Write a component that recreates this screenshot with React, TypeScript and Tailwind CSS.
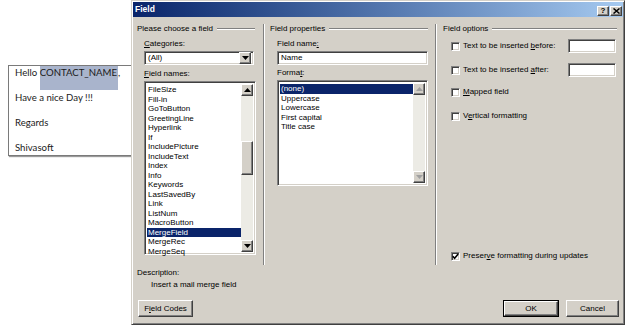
import React from "react";

const sunken =
  "border border-t-[#808080] border-l-[#808080] border-b-white border-r-white shadow-[inset_1px_1px_0_#404040,inset_-1px_-1px_0_#d4d0c8]";
const raised =
  "border border-t-white border-l-white border-b-[#404040] border-r-[#404040] shadow-[inset_-1px_-1px_0_#808080] bg-[#d4d0c8]";

function U({ children }: { children: React.ReactNode }) {
  return <span className="underline underline-offset-[1px]">{children}</span>;
}

function Arrow({ up, disabled }: { up?: boolean; disabled?: boolean }) {
  return (
    <div className={`${raised} w-[12px] h-[12px] flex items-center justify-center`}>
      <svg width="7" height="4" viewBox="0 0 7 4">
        {up ? (
          <polygon points="3.5,0 7,4 0,4" fill={disabled ? "#a0a0a0" : "#000"} />
        ) : (
          <polygon points="0,0 7,0 3.5,4" fill={disabled ? "#a0a0a0" : "#000"} />
        )}
      </svg>
    </div>
  );
}

function CheckBox({ checked }: { checked?: boolean }) {
  return (
    <div className={`${sunken} w-[9px] h-[9px] bg-white shrink-0 flex items-center justify-center`}>
      {checked && (
        <svg width="7" height="7" viewBox="0 0 7 7">
          <polyline points="0.8,3.2 2.6,5.2 6.2,1" fill="none" stroke="#000" strokeWidth="1.6" />
        </svg>
      )}
    </div>
  );
}

function GroupLabel({ text, mr }: { text: string; mr: string }) {
  return (
    <div className={`flex items-center h-[10px] ${mr}`}>
      <span className="leading-[10px] whitespace-nowrap">{text}</span>
      <div className="flex-1 ml-[4px] h-[2px] border-t border-t-[#808080] border-b border-b-white" />
    </div>
  );
}

const fieldNames = [
  "FileSize",
  "Fill-in",
  "GoToButton",
  "GreetingLine",
  "Hyperlink",
  "If",
  "IncludePicture",
  "IncludeText",
  "Index",
  "Info",
  "Keywords",
  "LastSavedBy",
  "Link",
  "ListNum",
  "MacroButton",
  "MergeField",
  "MergeRec",
  "MergeSeq",
];

const formats = ["(none)", "Uppercase", "Lowercase", "First capital", "Title case"];

export default function App() {
  return (
    <div className="relative w-[628px] h-[327px] bg-white overflow-hidden">
      {/* Document behind */}
      <div
        className="absolute left-[8px] top-[65px] w-[140px] h-[91px] border border-[#7a7a7a] shadow-[1px_1px_1px_#9a9a9a] bg-white pl-[6px] text-[9.6px] text-[#1a1a1a]"
        style={{ fontFamily: "Lato, 'Liberation Sans', sans-serif" }}
      >
        <div className="h-[25px] leading-[14px] whitespace-nowrap">
          Hello{" "}
          <span className="inline-block align-top h-[24px] bg-[#a9b4cc] pr-[1px]">CONTACT_NAME</span>,
        </div>
        <div className="h-[25px] leading-[14px]">Have a nice Day !!!</div>
        <div className="h-[25px] leading-[14px]">Regards</div>
        <div className="h-[25px] leading-[14px]">Shivasoft</div>
      </div>

      {/* Dialog */}
      <div
        className="absolute left-[131px] top-0 w-[494px] h-[325px] bg-[#d4d0c8] border border-t-[#d4d0c8] border-l-[#d4d0c8] border-b-[#404040] border-r-[#404040] shadow-[inset_1px_1px_0_#fff,inset_-1px_-1px_0_#808080] p-[1px] flex flex-col text-[8px] text-black"
        style={{ fontFamily: "'Liberation Sans', Arial, sans-serif" }}
      >
        {/* Title bar */}
        <div className="h-[15px] flex items-center bg-gradient-to-r from-[#0a246a] to-[#a6caf0] pl-[2px] pr-[1px]">
          <span className="font-bold text-white text-[8.5px] leading-[15px]">Field</span>
          <div className="ml-auto flex items-center mt-[2px]">
            <div className={`${raised} w-[12px] h-[10px] flex items-center justify-center font-bold text-[8px] leading-none`}>
              ?
            </div>
            <div className={`${raised} w-[12px] h-[10px] ml-[1px] flex items-center justify-center`}>
              <svg width="7" height="6" viewBox="0 0 7 6">
                <path d="M0.5 0.5 L6.5 5.5 M6.5 0.5 L0.5 5.5" stroke="#000" strokeWidth="1.5" />
              </svg>
            </div>
          </div>
        </div>

        {/* Body */}
        <div className="flex-1 flex flex-col pl-[4px] pr-[4px] pt-[7px]">
          <div className="flex h-[241px]">
            {/* Column 1 */}
            <div className="w-[126px] flex flex-col">
              <GroupLabel text="Please choose a field" mr="mr-[8px]" />
              <div className="pl-[7px] mt-[5px] h-[10px] leading-[10px]">
                <U>C</U>ategories:
              </div>
              <div className={`${sunken} ml-[7px] mt-[2px] w-[110px] h-[14px] bg-white flex items-center p-[2px]`}>
                <span className="pl-[1px] leading-[10px] flex-1">(All)</span>
                <Arrow />
              </div>
              <div className="pl-[7px] mt-[4px] h-[10px] leading-[10px]">
                <U>F</U>ield names:
              </div>
              <div className={`${sunken} ml-[7px] mt-[2px] w-[112px] h-[174px] bg-white flex p-[2px]`}>
                <div className="flex-1 flex flex-col pt-[1px]">
                  {fieldNames.map((n) => (
                    <div
                      key={n}
                      className={`h-[9.5px] leading-[9.5px] pl-[1px] whitespace-nowrap ${
                        n === "MergeField" ? "bg-[#0a246a] text-white" : ""
                      }`}
                    >
                      {n}
                    </div>
                  ))}
                </div>
                <div className="w-[12px] flex flex-col bg-[#ecebe5]">
                  <Arrow up />
                  <div className="h-[45px]" />
                  <div className={`${raised} w-[12px] h-[34px]`} />
                  <div className="flex-1" />
                  <Arrow />
                </div>
              </div>
            </div>

            {/* Separator */}
            <div className="w-[2px] border-l border-l-[#808080] border-r border-r-white" />

            {/* Column 2 */}
            <div className="w-[170px] flex flex-col pl-[5px]">
              <GroupLabel text="Field properties" mr="mr-[7px]" />
              <div className="pl-[7px] mt-[5px] h-[10px] leading-[10px]">
                Field name<U>:</U>
              </div>
              <div className={`${sunken} ml-[7px] mt-[2px] w-[151px] h-[14px] bg-white flex items-center px-[3px]`}>
                <span className="leading-[10px]">Name</span>
              </div>
              <div className="pl-[7px] mt-[3px] h-[10px] leading-[10px]">
                Forma<U>t</U>:
              </div>
              <div className={`${sunken} ml-[7px] mt-[2px] w-[151px] h-[106px] bg-white flex p-[2px]`}>
                <div className="flex-1 flex flex-col pt-[1px]">
                  {formats.map((n) => (
                    <div
                      key={n}
                      className={`h-[9.5px] leading-[9.5px] pl-[1px] whitespace-nowrap ${
                        n === "(none)" ? "bg-[#0a246a] text-white" : ""
                      }`}
                    >
                      {n}
                    </div>
                  ))}
                </div>
                <div className="w-[12px] flex flex-col bg-[#ecebe5]">
                  <Arrow up disabled />
                  <div className="flex-1" />
                  <Arrow disabled />
                </div>
              </div>
            </div>

            {/* Separator */}
            <div className="w-[2px] border-l border-l-[#808080] border-r border-r-white" />

            {/* Column 3 */}
            <div className="flex-1 flex flex-col pl-[6px] pb-[4px]">
              <GroupLabel text="Field options" mr="mr-[2px]" />
              <div className="flex items-center h-[14px] mt-[5px] pl-[8px] pr-[3px]">
                <CheckBox />
                <span className="ml-[3px] leading-[10px] whitespace-nowrap">
                  Text to be inserted <U>b</U>efore:
                </span>
                <div className={`${sunken} ml-auto w-[48px] h-[14px] bg-white`} />
              </div>
              <div className="flex items-center h-[14px] mt-[10px] pl-[8px] pr-[3px]">
                <CheckBox />
                <span className="ml-[3px] leading-[10px] whitespace-nowrap">
                  Text to be inserted <U>a</U>fter:
                </span>
                <div className={`${sunken} ml-auto w-[48px] h-[14px] bg-white`} />
              </div>
              <div className="flex items-center h-[10px] mt-[10px] pl-[8px]">
                <CheckBox />
                <span className="ml-[3px] leading-[10px]">
                  <U>M</U>apped field
                </span>
              </div>
              <div className="flex items-center h-[10px] mt-[14px] pl-[8px]">
                <CheckBox />
                <span className="ml-[3px] leading-[10px]">
                  V<U>e</U>rtical formatting
                </span>
              </div>
              <div className="flex items-center h-[10px] mt-auto pl-[8px]">
                <CheckBox checked />
                <span className="ml-[3px] leading-[10px]">
                  Preser<U>v</U>e formatting during updates
                </span>
              </div>
            </div>
          </div>

          {/* Description */}
          <div className="mt-[3px] h-[10px] leading-[10px]">Description:</div>
          <div className="mt-[2px] h-[10px] leading-[10px] pl-[14px]">Insert a mail merge field</div>

          {/* Buttons */}
          <div className="flex mt-[10px] h-[17px] pl-[1px]">
            <div className={`${raised} w-[55px] h-[17px] flex items-center justify-center`}>
              F<U>i</U>eld Codes
            </div>
            <div className="ml-auto w-[56px] h-[17px] border border-black">
              <div className={`${raised} w-full h-full flex items-center justify-center`}>OK</div>
            </div>
            <div className={`${raised} ml-[7px] w-[53px] h-[17px] flex items-center justify-center`}>Cancel</div>
          </div>
        </div>
      </div>
    </div>
  );
}
